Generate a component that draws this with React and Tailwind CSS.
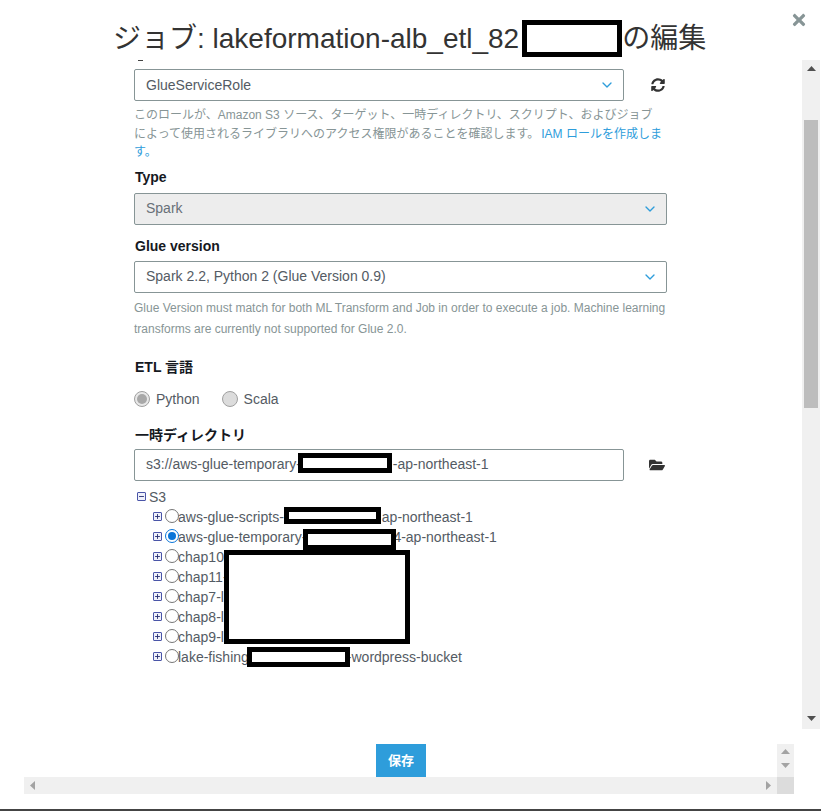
import React from "react";
import { ChevronDown, Plus, Minus } from "lucide-react";
import { FaSyncAlt, FaFolderOpen, FaTimes } from "react-icons/fa";

const font = "font-['Liberation_Sans','Noto_Sans_CJK_JP',sans-serif]";

const SelectBox = ({ value, className = "" }) => (
  <div className={`flex h-[32px] items-center justify-between rounded-[2px] border border-[#879596] pl-[11px] pr-[8px] text-[14px] ${className}`}>
    <span>{value}</span>
    <ChevronDown size={16} strokeWidth={2} className="text-[#2e9ddb]" />
  </div>
);

const Label = ({ children, className = "" }) => (
  <div className={`ml-[1px] text-[14px] leading-[18px] font-bold text-[#16191f] ${className}`}>{children}</div>
);

const Expander = ({ open }) => (
  <span className="flex h-[9px] w-[9px] items-center justify-center rounded-[1px] border border-[#4a55a8] bg-[#eef0fa] text-[#20286e]">
    {open ? <Minus size={7} strokeWidth={3} /> : <Plus size={7} strokeWidth={3} />}
  </span>
);

const TreeRow = ({ label, gap = 0, tail = "", checked }) => (
  <div className="flex h-[20px] items-center pl-[19px] text-[14px] text-[#545b64]">
    <span className="mb-[3px]"><Expander /></span>
    <span className={`mb-[3px] ml-[3px] h-[14px] w-[14px] mr-[-1px] rounded-full border ${checked ? "border-[#0a75d8] p-[2px]" : "border-[#767676]"}`}>
      {checked && <span className="block h-full w-full rounded-full bg-[#0a75d8]" />}
    </span>
    <span>{label}</span>
    {gap > 0 && <span className="inline-block" style={{ width: gap }} />}
    <span>{tail}</span>
  </div>
);

const Radio = ({ label, selected }) => (
  <div className="flex items-center gap-[6px] text-[14px] text-[#545b64]">
    <span className={`flex h-[16px] w-[16px] items-center justify-center rounded-full border border-[#a0a0a0] ${selected ? "bg-[#e8e8e8]" : "bg-[#dcdcdc]"}`}>
      {selected && <span className="h-[10px] w-[10px] rounded-full bg-[#a8a8a8]" />}
    </span>
    {label}
  </div>
);

const Redact = ({ className }) => (
  <div className={`absolute border-[5px] border-black bg-white ${className}`} />
);

const ScrollArrow = ({ dir, className = "" }) => {
  const pts = {
    up: "0,5 4.5,0 9,5",
    down: "0,0 4.5,5 9,0",
    left: "5,0 0,4.5 5,9",
    right: "0,0 5,4.5 0,9",
  }[dir];
  return (
    <svg width="9" height="9" viewBox="0 0 9 9" className={className} fill="currentColor">
      <polygon points={pts} />
    </svg>
  );
};

export default function App() {
  return (
    <div className={`relative flex h-[811px] w-[821px] flex-col overflow-hidden border-b-2 border-[#444] bg-white ${font}`}>
      {/* header */}
      <div className="relative h-[60px] shrink-0">
        <h1 className="pt-[20px] pl-[113px] text-[28px] leading-[38px] font-normal whitespace-nowrap text-[#333]">
          ジョブ: lakeformation-alb_etl_82<span className="inline-block w-[103px]" />の編集
        </h1>
        <Redact className="top-[20px] left-[522px] h-[37px] w-[100px]" />
        <FaTimes size={18} className="absolute top-[11px] right-[13px] text-[#879596]" />
      </div>

      {/* scrolling body */}
      <div className="flex h-[669px] shrink-0">
        <div className="relative w-[802px] overflow-hidden pt-[9px] pl-[134px]">
          <div className="absolute top-0 left-[138px] h-[1px] w-[5px] bg-[#444]" />
          <div className="flex items-center">
            <SelectBox value="GlueServiceRole" className="w-[490px] text-[#545b64]" />
            <FaSyncAlt size={14} className="ml-[27px] text-[#333]" />
          </div>
          <div className="mt-[5px] w-[533px] text-[12px] leading-[18.5px] text-[#879596]">
            <div>このロールが、Amazon S3 ソース、ターゲット、一時ディレクトリ、スクリプト、およびジョブ</div>
            <div className="flex">
              <span>によって使用されるライブラリへのアクセス権限があることを確認します。</span>
              <span className="ml-[2px] text-[#2e9ddb]">IAM ロールを作成しま</span>
            </div>
            <div className="text-[#2e9ddb]">す。</div>
          </div>

          <Label className="mt-[6px]">Type</Label>
          <SelectBox value="Spark" className="mt-[7px] w-[533px] bg-[#ededed] text-[#687078]" />

          <Label className="mt-[12px]">Glue version</Label>
          <SelectBox value="Spark 2.2, Python 2 (Glue Version 0.9)" className="mt-[6px] w-[533px] text-[#545b64]" />
          <p className="mt-[5px] w-[533px] text-[12px] leading-[21px] text-[#879596]">
            Glue Version must match for both ML Transform and Job in order to execute a job. Machine learning transforms are currently not supported for Glue 2.0.
          </p>

          <Label className="mt-[18px]">ETL 言語</Label>
          <div className="mt-[13px] flex gap-[22px]">
            <Radio label="Python" selected />
            <Radio label="Scala" />
          </div>

          <Label className="mt-[16px]">一時ディレクトリ</Label>
          <div className="mt-[5px] flex items-center">
            <div className="flex h-[32px] w-[490px] items-center rounded-[2px] border border-[#879596] pl-[11px] text-[14px] text-[#545b64]">
              <span>s3://aws-glue-temporary-</span>
              <span className="inline-block w-[92px]" />
              <span>-ap-northeast-1</span>
            </div>
            <FaFolderOpen size={16} className="ml-[25px] text-[#333]" />
          </div>
          <Redact className="top-[393px] left-[298px] h-[20px] w-[94px]" />

          <div className="mt-[7px] flex h-[20px] items-center pl-[3px] text-[14px] text-[#545b64]">
            <span className="mb-[3px]"><Expander open /></span>
            <span className="ml-[3px]">S3</span>
          </div>
          <TreeRow label="aws-glue-scripts-" gap={98} tail="ap-northeast-1" />
          <TreeRow label="aws-glue-temporary-" gap={87} tail="4-ap-northeast-1" checked />
          <TreeRow label="chap10" />
          <TreeRow label="chap11-" />
          <TreeRow label="chap7-l" />
          <TreeRow label="chap8-l" />
          <TreeRow label="chap9-l" />
          <TreeRow label="lake-fishing" gap={98} tail="-wordpress-bucket" />
          <Redact className="top-[447px] left-[284px] h-[17px] w-[97px]" />
          <Redact className="top-[469px] left-[303px] h-[21px] w-[93px]" />
          <Redact className="top-[490px] left-[224px] h-[94px] w-[186px]" />
          <Redact className="top-[587px] left-[247px] h-[20px] w-[103px]" />
        </div>

        {/* vertical scrollbar */}
        <div className="flex w-[18px] flex-col items-center justify-between bg-[#f0f0f0] text-[#505050]">
          <div className="flex w-full flex-1 flex-col">
            <div className="flex h-[17px] items-center justify-center"><ScrollArrow dir="up" className="mt-[4px]" /></div>
            <div className="mx-[2px] mt-[43px] h-[288px] bg-[#bdbdbd]" />
          </div>
          <div className="flex h-[17px] items-center justify-center"><ScrollArrow dir="down" /></div>
        </div>
      </div>

      {/* footer */}
      <div className="relative flex-1">
        <div className="absolute top-[15px] left-[376px] flex h-[33px] w-[50px] items-center justify-center bg-[#2e9ddb] text-[13px] font-bold text-white">
          保存
        </div>
        <div className="absolute top-[15px] left-[777px] flex h-[33px] w-[17px] flex-col items-center justify-between bg-[#f0f0f0] py-[5px] text-[#a3a3a3]">
          <ScrollArrow dir="up" />
          <ScrollArrow dir="down" />
        </div>
        <div className="absolute top-[48px] left-[24px] flex h-[17px] w-[753px] items-center justify-between bg-[#f0f0f0] px-[6px] text-[#a3a3a3]">
          <ScrollArrow dir="left" />
          <ScrollArrow dir="right" className="mr-[-4px]" />
        </div>
        <div className="absolute top-[48px] left-[777px] h-[17px] w-[17px] bg-[#dcdcdc]" />
      </div>
    </div>
  );
}
